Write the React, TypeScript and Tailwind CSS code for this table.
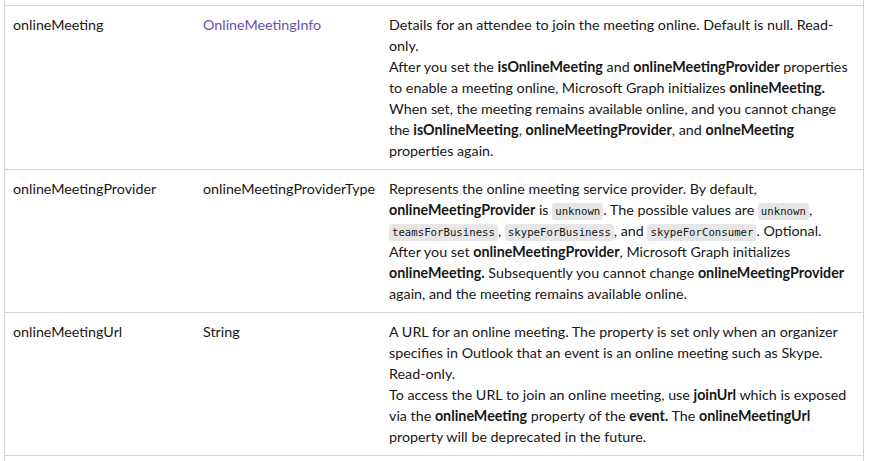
import { ReactNode } from "react";

const Code = ({ children }: { children: ReactNode }) => (
  <code className="rounded-[3px] bg-[#e6e6e6] px-[3px] py-[2px] font-['DejaVu_Sans_Mono',monospace] text-[10.7px] leading-[17px] text-[#171717]">
    {children}
  </code>
);

const B = ({ children }: { children: ReactNode }) => <strong className="font-bold">{children}</strong>;

type Row = {
  name: string;
  type: ReactNode;
  desc: ReactNode;
};

const rows: Row[] = [
  {
    name: "onlineMeeting",
    type: <a className="text-[#6b4fb0]">OnlineMeetingInfo</a>,
    desc: (
      <>
        Details for an attendee to join the meeting online. Default is null. Read-only.
        <br />
        After you set the <B>isOnlineMeeting</B> and <B>onlineMeetingProvider</B> properties to enable a meeting online,
        Microsoft Graph initializes <B>onlineMeeting.</B> When set, the meeting remains available online, and you cannot
        change the <B>isOnlineMeeting</B>, <B>onlineMeetingProvider</B>, and <B>onlneMeeting</B> properties again.
      </>
    ),
  },
  {
    name: "onlineMeetingProvider",
    type: "onlineMeetingProviderType",
    desc: (
      <>
        Represents the online meeting service provider. By default, <B>onlineMeetingProvider</B> is <Code>unknown</Code>.
        The possible values are <Code>unknown</Code>, <Code>teamsForBusiness</Code>, <Code>skypeForBusiness</Code>, and{" "}
        <Code>skypeForConsumer</Code>. Optional.
        <br />
        After you set <B>onlineMeetingProvider</B>, Microsoft Graph initializes <B>onlineMeeting.</B> Subsequently you
        cannot change <B>onlineMeetingProvider</B> again, and the meeting remains available online.
      </>
    ),
  },
  {
    name: "onlineMeetingUrl",
    type: "String",
    desc: (
      <>
        A URL for an online meeting. The property is set only when an organizer specifies in Outlook that an event is an
        online meeting such as Skype. Read-only.
        <br />
        To access the URL to join an online meeting, use <B>joinUrl</B> which is exposed via the <B>onlineMeeting</B>{" "}
        property of the <B>event.</B> The <B>onlineMeetingUrl</B> property will be deprecated in the future.
      </>
    ),
  },
];

export default function App() {
  return (
    <div className="min-h-[461px] bg-white pl-[4px]">
      <div className="min-h-[461px] w-[860px] border-x border-[#d4d4d4] pt-[5px] font-['Lato',sans-serif] text-[14.3px] leading-[21px] text-[#171717]">
        {rows.map((r) => (
          <div key={r.name} className="grid grid-cols-[190px_186px_1fr] border-y border-[#d4d4d4] -mt-px first:mt-0">
            <div className="px-[8px] py-[8px]">{r.name}</div>
            <div className="px-[8px] py-[8px]">{r.type}</div>
            <div className="px-[8px] py-[8px]">{r.desc}</div>
          </div>
        ))}
      </div>
    </div>
  );
}
